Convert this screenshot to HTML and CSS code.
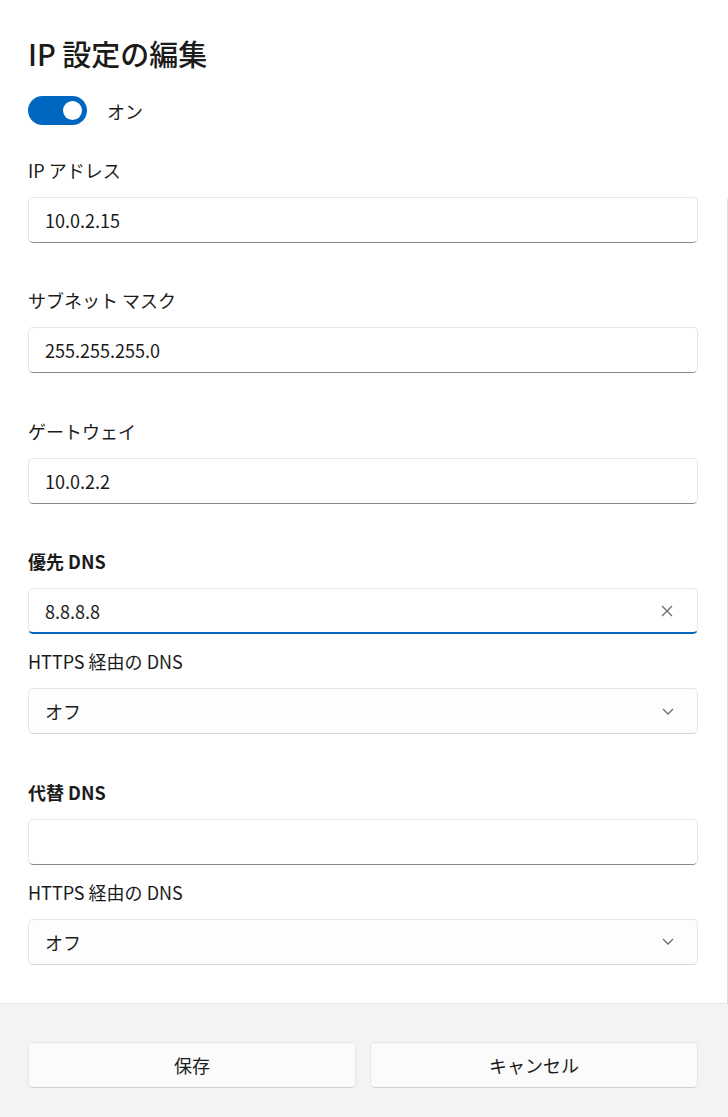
FILE: index.html
```
<!DOCTYPE html>
<html lang="ja">
<head>
<meta charset="utf-8">
<title>IP 設定の編集</title>
<link rel="stylesheet" href="styles.css">
</head>
<body>
<div class="dialog">
  <div class="content">
    <h1 class="title">IP 設定の編集</h1>
    <div class="toggle-row">
      <div class="toggle"><span class="knob"></span></div>
      <span class="toggle-text">オン</span>
    </div>

    <div class="section">
      <div class="label">IP アドレス</div>
      <div class="field"><span class="value">10.0.2.15</span></div>
    </div>

    <div class="section">
      <div class="label">サブネット マスク</div>
      <div class="field"><span class="value">255.255.255.0</span></div>
    </div>

    <div class="section">
      <div class="label">ゲートウェイ</div>
      <div class="field"><span class="value">10.0.2.2</span></div>
    </div>

    <div class="section">
      <div class="label bold">優先 DNS</div>
      <div class="field focused">
        <span class="value">8.8.8.8</span>
        <svg class="icon-x" width="12" height="12" viewBox="0 0 12 12"><path d="M1 1 L11 11 M11 1 L1 11" stroke="#6b6b6b" stroke-width="1.3" fill="none"/></svg>
      </div>
    </div>

    <div class="subsection">
      <div class="label">HTTPS 経由の DNS</div>
      <div class="field select">
        <span class="value">オフ</span>
        <svg class="icon-chev" width="12" height="7" viewBox="0 0 12 7"><path d="M1 1 L6 6 L11 1" stroke="#6b6b6b" stroke-width="1.3" fill="none"/></svg>
      </div>
    </div>

    <div class="section">
      <div class="label bold">代替 DNS</div>
      <div class="field"><span class="value"></span></div>
    </div>

    <div class="subsection">
      <div class="label">HTTPS 経由の DNS</div>
      <div class="field select">
        <span class="value">オフ</span>
        <svg class="icon-chev" width="12" height="7" viewBox="0 0 12 7"><path d="M1 1 L6 6 L11 1" stroke="#6b6b6b" stroke-width="1.3" fill="none"/></svg>
      </div>
    </div>
  </div>
  <div class="scrollbar"></div>
  <div class="footer">
    <button class="btn">保存</button>
    <button class="btn">キャンセル</button>
  </div>
</div>
</body>
</html>
```
FILE: styles.css
```
html, body {
  margin: 0;
  padding: 0;
  background: #ffffff;
}
body {
  font-family: "Noto Sans CJK JP", "Noto Sans", sans-serif;
  color: #1b1b1b;
  width: 728px;
  height: 1117px;
  overflow: hidden;
}
.dialog {
  position: relative;
  display: flex;
  flex-direction: column;
  height: 1117px;
}
.content {
  flex: 1;
  padding: 35px 30px 0 28px;
}
.title {
  margin: 0;
  font-size: 29px;
  line-height: 36px;
  font-weight: 500;
  color: #1b1b1b;
}
.toggle-row {
  display: flex;
  align-items: center;
  gap: 20px;
  margin-top: 25px;
  height: 29px;
}
.toggle {
  width: 59px;
  height: 29px;
  border-radius: 15px;
  background: #0067c0;
  display: flex;
  align-items: center;
  justify-content: flex-end;
  padding-right: 5px;
  box-sizing: border-box;
}
.knob {
  width: 19px;
  height: 19px;
  border-radius: 50%;
  background: #ffffff;
}
.toggle-text {
  font-size: 18px;
  line-height: 26px;
}
.section {
  margin-top: 31.5px;
}
.section ~ .section {
  margin-top: 44.5px;
}
.subsection {
  margin-top: 14px;
}
.label {
  font-size: 18px;
  line-height: 26px;
  margin-bottom: 14px;
  color: #1b1b1b;
}
.label.bold {
  font-weight: 600;
}
.field {
  height: 46px;
  box-sizing: border-box;
  background: #ffffff;
  border: 1px solid #e6e6e6;
  border-bottom: 1px solid #8a8a8a;
  border-radius: 5px;
  display: flex;
  align-items: center;
  padding: 0 24px 0 16px;
  font-size: 18px;
}
.field .value {
  flex: 1;
  line-height: 26px;
}
.field.focused {
  border-bottom: 2px solid #0067c0;
  padding-top: 1px;
}
.field.select {
  background: #fdfdfd;
  border-bottom-color: #d6d6d6;
  padding-right: 23px;
}
.icon-x {
  display: block;
}
.icon-chev {
  display: block;
}
.scrollbar {
  position: absolute;
  right: 0;
  top: 199px;
  width: 1px;
  height: 804px;
  background: #dedede;
}
.footer {
  height: 114px;
  box-sizing: border-box;
  background: #f3f3f3;
  border-top: 1px solid #e5e5e5;
  padding: 38px 30px 0 28px;
  display: flex;
  gap: 14px;
  align-items: flex-start;
}
.btn {
  flex: 1;
  height: 46px;
  background: #fbfbfb;
  border: 1px solid #e5e5e5;
  border-bottom-color: #cfcfcf;
  border-radius: 5px;
  font-family: "Noto Sans CJK JP", "Noto Sans", sans-serif;
  font-size: 18px;
  color: #1b1b1b;
  padding: 0;
}
```
